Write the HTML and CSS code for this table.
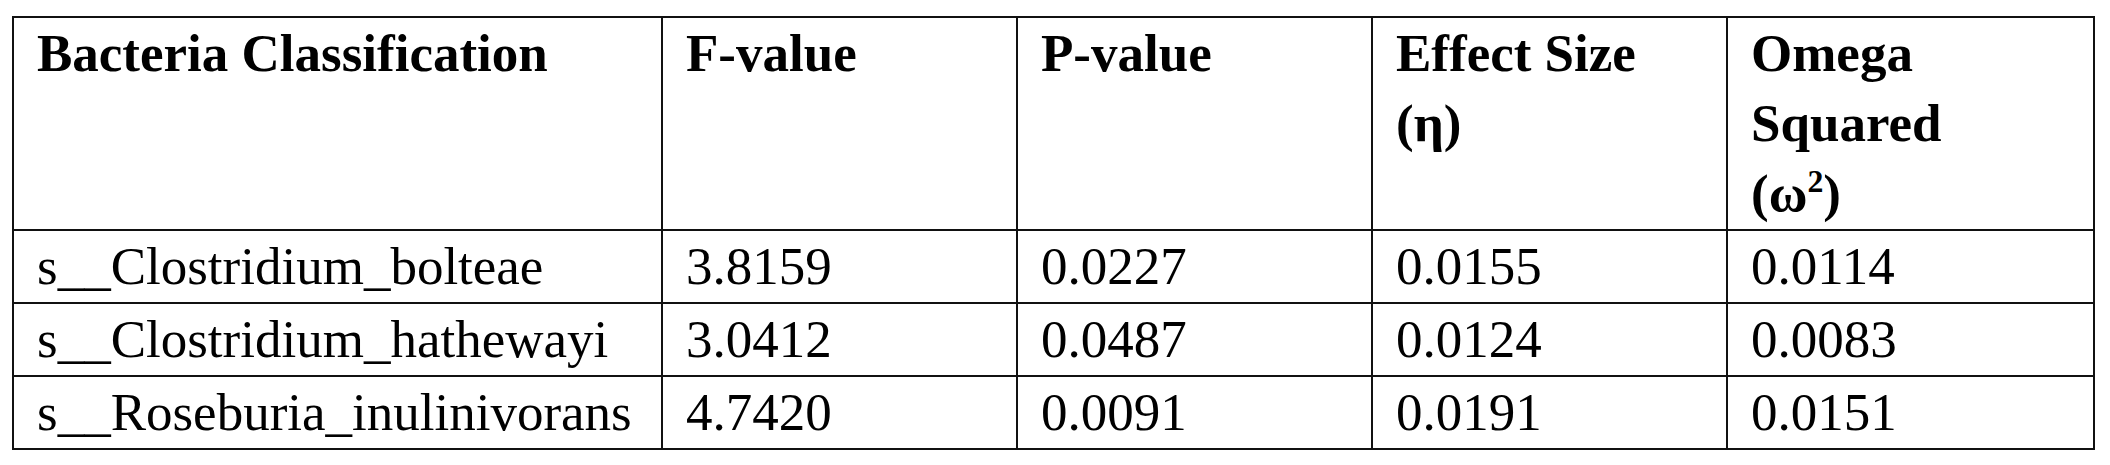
FILE: index.html
```html
<!DOCTYPE html>
<html lang="en">
<head>
    <meta charset="UTF-8">
    <meta name="viewport" content="width=device-width, initial-scale=1.0">
    <title>Bacteria ANOVA</title>

    <link rel="stylesheet" href="styles.css">
</head>
<body>
    <div id="page">
        <table id="anova_table">
            <colgroup>
                <col class="col_name">
                <col class="col_num">
                <col class="col_num">
                <col class="col_num">
                <col>
            </colgroup>
            <tr class="head">
                <th>Bacteria Classification</th>
                <th>F-value</th>
                <th>P-value</th>
                <th>Effect Size<br>(η)</th>
                <th>Omega<br>Squared<br>(ω<sup>2</sup>)</th>
            </tr>
            <tr>
                <td>s__Clostridium_bolteae</td>
                <td>3.8159</td>
                <td>0.0227</td>
                <td>0.0155</td>
                <td>0.0114</td>
            </tr>
            <tr>
                <td>s__Clostridium_hathewayi</td>
                <td>3.0412</td>
                <td>0.0487</td>
                <td>0.0124</td>
                <td>0.0083</td>
            </tr>
            <tr>
                <td>s__Roseburia_inulinivorans</td>
                <td>4.7420</td>
                <td>0.0091</td>
                <td>0.0191</td>
                <td>0.0151</td>
            </tr>
        </table>
    </div>
</body>
</html>
```

FILE: styles.css
```css
body{
    margin: 0;
    background: #fff;
}
#page{
    padding: 16px 0 0 12px;
}

#anova_table{
    width: 2083px;
    table-layout: fixed;
    border-collapse: collapse;
    border: 2px solid #111;
    font-family: "Liberation Serif", "Times New Roman", serif;
    font-size: 53px;
    color: #000;
}
.col_name{
    width: 649px;
}
.col_num{
    width: 355px;
}

th, td{
    text-align: left;
    vertical-align: top;
    line-height: 70px;
    padding: 0 22px 1px 23px;
    border: 2px solid #111;
    white-space: nowrap;
}
th{
    font-weight: bold;
}
td{
    font-weight: normal;
}

sup{
    font-size: 60%;
    line-height: 0;
    vertical-align: 0.6em;
}
```
